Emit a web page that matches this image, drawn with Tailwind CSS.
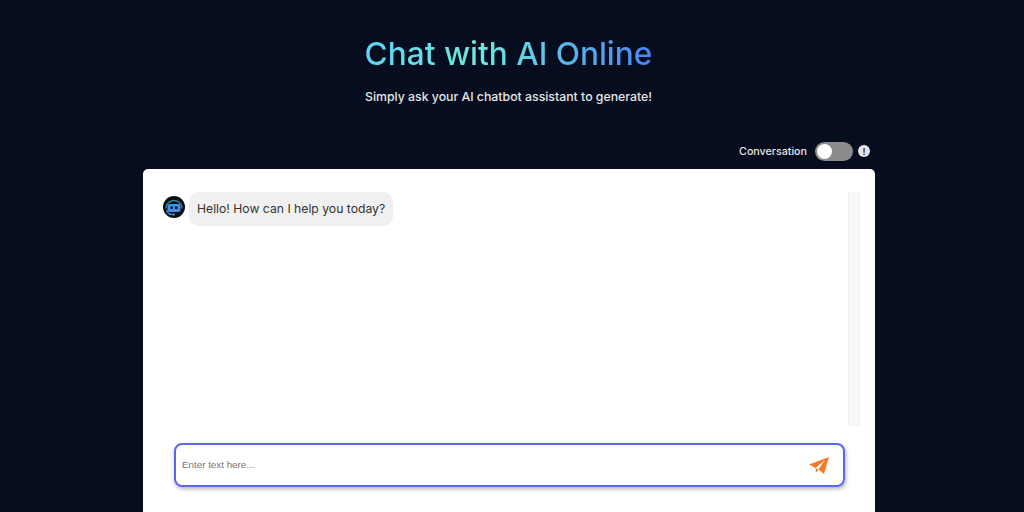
<!DOCTYPE html>
<html lang="en">
<head>
    <meta charset="UTF-8">
    <title>Chat with AI Online</title>
    <script src="https://cdn.jsdelivr.net/npm/@tailwindcss/browser@4"></script>
</head>
<body class="bg-[#060d1e] h-[512px] overflow-hidden font-['Inter',sans-serif]">
    <div class="w-[1017px] h-[512px]">
        <div class="pt-[34px] text-center">
            <h1 class="text-[31.6px] leading-[40px] font-medium bg-gradient-to-r from-[#5fd3f3] via-[#6eeadb] via-40% to-[#5080f5] bg-clip-text text-transparent w-fit mx-auto">Chat with AI Online</h1>
            <p class="mt-[14px] text-[12.3px] leading-[18px] font-medium text-[#e5e5e5]">Simply ask your AI chatbot assistant to generate!</p>
        </div>
        <div class="mt-[35px] w-[732px] ml-[143px]">
            <div class="flex items-center justify-end gap-[5px] pr-[5px] h-[20px]">
                <span class="mr-[3px] pt-[2px] text-[10.7px] font-medium text-[#e5e5e5]">Conversation</span>
                <div class="w-[38px] h-[19px] rounded-full bg-[#8b8b8b] p-[2px]">
                    <div class="w-[15px] h-[15px] rounded-full bg-white"></div>
                </div>
                <div class="w-[12px] h-[12px] rounded-full bg-[#e5e5e5] flex items-center justify-center text-[9px] leading-none font-bold text-[#333]">!</div>
            </div>
            <div class="mt-[8px] bg-white rounded-t-[5px] h-[343px] pt-[23px] pl-[20px] pr-[15px]">
                <div class="flex h-[234px]">
                    <div class="flex-1 flex items-start gap-[4px]">
                        <svg class="mt-[4px]" width="22" height="22" viewBox="0 0 22 22">
                            <circle cx="11" cy="11" r="11" fill="#0b0f14"/>
                            <path d="M3 12.5a8 8 0 0 1 16 0" fill="none" stroke="#2f8f9a" stroke-width="1.5"/>
                            <rect x="4.5" y="8" width="13" height="8" rx="2" fill="#3f8fe8"/>
                            <rect x="7.5" y="10.5" width="2.5" height="2.5" fill="#0b0f14"/>
                            <rect x="12" y="10.5" width="2.5" height="2.5" fill="#0b0f14"/>
                            <path d="M3.5 14q1 4.5 6 4.5" fill="none" stroke="#3f8fe8" stroke-width="1.2"/>
                            <circle cx="10.5" cy="18.5" r="1.2" fill="#3f8fe8"/>
                        </svg>
                        <div class="bg-[#f0f0f0] rounded-[10px] h-[34px] w-[204px] flex items-center pl-[8px] text-[12.2px] text-[#333]">Hello! How can I help you today?</div>
                    </div>
                    <div class="w-[12px] bg-[#f8f8f8] border-x border-[#f0f0f0]"></div>
                </div>
                <div class="mt-[17px] ml-[11px] mr-[15px] h-[44px] border-2 border-[#5a68ea] rounded-[8px] shadow-[1px_2px_4px_rgba(0,0,0,0.3)] flex items-center justify-between pl-[6px] pr-[14px]">
                    <span class="font-['Liberation_Sans',sans-serif] text-[9.8px] text-[#757575]">Enter text here...</span>
                    <svg width="20" height="17" viewBox="0 0 20 17">
                        <path d="M0 7.5 20 0 15 17 9.5 12.5 7 15.5 6.5 11Z" fill="#f47b2a"/>
                        <path d="M6.5 11 15.5 3.5 9.5 12.5Z" fill="#fff"/>
                    </svg>
                </div>
            </div>
        </div>
    </div>
</body>
</html>
